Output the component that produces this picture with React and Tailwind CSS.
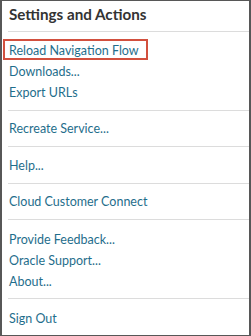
export default function App() {
  const link = "block h-[21px] leading-[21px] text-[12.5px] text-[#1f6e8c] pl-[1px]";
  const sep = "h-px bg-[#dcdcdc]";
  return (
    <div className="w-[251px] h-[336px] bg-white border-x-2 border-y border-[#575757] relative" style={{ fontFamily: "Lato, 'Noto Sans', sans-serif" }}>
      <div className="pl-[6px] flex flex-col">
        <div className="h-[30px] pl-[1px] pt-[4px] text-[15.2px] font-bold text-[#333] leading-[19px]">Settings and Actions</div>
        <div className={sep} />
        <div className="py-[7.5px]">
          <span className={link}>Reload Navigation Flow</span>
          <span className={link}>Downloads...</span>
          <span className={link}>Export URLs</span>
        </div>
        <div className={sep} />
        <div className="pt-[7px] pb-[7px]">
          <span className={link}>Recreate Service...</span>
        </div>
        <div className={sep} />
        <div className="pt-[8px] pb-[7px]">
          <span className={link}>Help...</span>
        </div>
        <div className={sep} />
        <div className="pt-[7px] pb-[7px]">
          <span className={link}>Cloud Customer Connect</span>
        </div>
        <div className={sep} />
        <div className="pt-[9px] pb-[6px]">
          <span className={link}>Provide Feedback...</span>
          <span className={link}>Oracle Support...</span>
          <span className={link}>About...</span>
        </div>
        <div className={sep} />
        <div className="pt-[9px]">
          <span className={link}>Sign Out</span>
        </div>
      </div>
      <div className="absolute left-[1px] top-[38px] w-[145px] h-[21px] border-2 border-[#d2503e]" />
    </div>
  );
}
